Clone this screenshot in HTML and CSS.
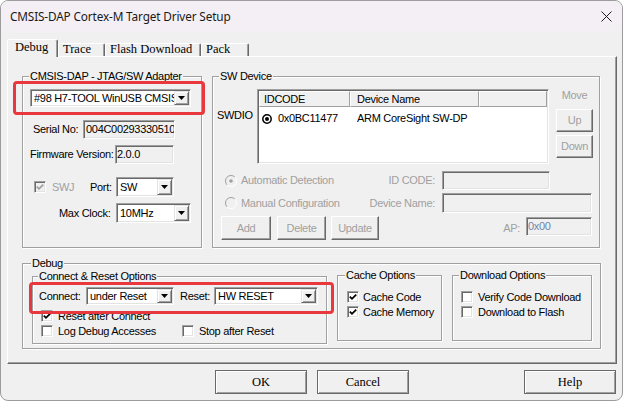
FILE: index.html
```html
<!DOCTYPE html>
<html>
<head>
<meta charset="utf-8">
<title>CMSIS-DAP Cortex-M Target Driver Setup</title>
<link rel="stylesheet" href="styles.css">
</head>
<body>
<div class="window">
  <div class="titlebar">
    <span class="title">CMSIS-DAP Cortex-M Target Driver Setup</span>
    <svg class="close" width="11" height="11" viewBox="0 0 11 11"><path d="M0.5 0.5L10.5 10.5M10.5 0.5L0.5 10.5" stroke="#1b1b1b" stroke-width="1" fill="none"/></svg>
  </div>
  <div class="client">
    <div class="tabs">
      <div class="tab active t-debug">Debug</div>
      <div class="tab t-trace">Trace</div>
      <div class="tab t-flash">Flash Download</div>
      <div class="tab t-pack">Pack</div>
    </div>
    <div class="panel">
      <div class="toprow">
        <div class="group g-adapter">
          <div class="legend lg-adapter">CMSIS-DAP - JTAG/SW Adapter</div>
          <div class="row ad1">
            <div class="combo c-adapter"><span class="cval">#98 H7-TOOL WinUSB CMSIS-DAP</span><span class="drop"><svg width="7" height="4" viewBox="0 0 7 4"><path d="M0 0H7L3.5 4Z" fill="#000"/></svg></span></div>
          </div>
          <div class="row ad2"><span class="lbl l-serial">Serial No:</span><div class="edit e-serial">004C0029333051000000</div></div>
          <div class="row ad3"><span class="lbl l-fw">Firmware Version:</span><div class="edit e-fw">2.0.0</div></div>
          <div class="row ad4">
            <div class="chkitem swj"><span class="chk dis"><svg width="8" height="8" viewBox="0 0 8 8"><polyline points="0.8,3.6 3,5.8 7.2,1.6" fill="none" stroke="#a0a0a0" stroke-width="1.8"/></svg></span><span class="dtext">SWJ</span></div>
            <span class="lbl l-port">Port:</span>
            <div class="combo c-port"><span class="cval">SW</span><span class="drop"><svg width="7" height="4" viewBox="0 0 7 4"><path d="M0 0H7L3.5 4Z" fill="#000"/></svg></span></div>
          </div>
          <div class="row ad5">
            <span class="lbl l-clock">Max Clock:</span>
            <div class="combo c-clock"><span class="cval">10MHz</span><span class="drop"><svg width="7" height="4" viewBox="0 0 7 4"><path d="M0 0H7L3.5 4Z" fill="#000"/></svg></span></div>
          </div>
        </div>
        <div class="group g-swdev">
          <div class="legend lg-sw">SW Device</div>
          <div class="sw-top">
            <span class="lbl l-swdio">SWDIO</span>
            <div class="listbox">
              <div class="lhead"><span class="hcell h1">IDCODE</span><span class="hcell h2">Device Name</span><span class="hcell h3"></span></div>
              <div class="lrow">
                <span class="lc1"><svg class="lradio" width="10" height="10" viewBox="0 0 10 10"><circle cx="5" cy="5" r="4.2" fill="#fff" stroke="#000" stroke-width="1.5"/><circle cx="5" cy="5" r="2" fill="#000"/></svg>0x0BC11477</span>
                <span class="lc2">ARM CoreSight SW-DP</span>
              </div>
            </div>
            <div class="movecol">
              <span class="dtext movelbl">Move</span>
              <div class="btn b-up">Up</div>
              <div class="btn b-down">Down</div>
            </div>
          </div>
          <div class="row sw-b">
            <div class="sw-left">
              <span class="radio"><svg width="12" height="12" viewBox="0 0 12 12"><circle cx="6" cy="6" r="5.5" fill="#f0f0f0"/><path d="M2.1 9.9A5.5 5.5 0 0 1 9.9 2.1" fill="none" stroke="#a0a0a0" stroke-width="1"/><path d="M9.9 2.1A5.5 5.5 0 0 1 2.1 9.9" fill="none" stroke="#fff" stroke-width="1"/><circle cx="6" cy="6" r="1.8" fill="#a0a0a0"/></svg></span>
              <span class="dtext rtext">Automatic Detection</span>
              <span class="dtext rlbl">ID CODE:</span>
            </div>
            <div class="edit e-idcode"></div>
          </div>
          <div class="row sw-c">
            <div class="sw-left">
              <span class="radio"><svg width="12" height="12" viewBox="0 0 12 12"><circle cx="6" cy="6" r="5.5" fill="#f0f0f0"/><path d="M2.1 9.9A5.5 5.5 0 0 1 9.9 2.1" fill="none" stroke="#a0a0a0" stroke-width="1"/><path d="M9.9 2.1A5.5 5.5 0 0 1 2.1 9.9" fill="none" stroke="#fff" stroke-width="1"/></svg></span>
              <span class="dtext rtext">Manual Configuration</span>
              <span class="dtext rlbl">Device Name:</span>
            </div>
            <div class="edit e-devname"></div>
          </div>
          <div class="row sw-d">
            <div class="btn b-add">Add</div>
            <div class="btn b-del">Delete</div>
            <div class="btn b-upd">Update</div>
            <span class="dtext ap">AP:</span>
            <div class="edit e-ap"><span class="aptext">0x00</span></div>
          </div>
        </div>
      </div>
      <div class="group g-debug">
        <div class="legend lg-debug">Debug</div>
        <div class="dbg-row">
          <div class="group g-conn">
            <div class="legend lg-conn">Connect &amp; Reset Options</div>
            <div class="row cn1">
              <span class="lbl l-connect">Connect:</span>
              <div class="combo c-connect"><span class="cval">under Reset</span><span class="drop"><svg width="7" height="4" viewBox="0 0 7 4"><path d="M0 0H7L3.5 4Z" fill="#000"/></svg></span></div>
              <span class="lbl l-reset">Reset:</span>
              <div class="combo c-reset"><span class="cval">HW RESET</span><span class="drop"><svg width="7" height="4" viewBox="0 0 7 4"><path d="M0 0H7L3.5 4Z" fill="#000"/></svg></span></div>
            </div>
            <div class="row cn2">
              <div class="chkitem ci-conn"><span class="chk"><svg width="8" height="8" viewBox="0 0 8 8"><polyline points="0.8,3.6 3,5.8 7.2,1.6" fill="none" stroke="#000" stroke-width="1.8"/></svg></span><span>Reset after Connect</span></div>
            </div>
            <div class="row cn3">
              <div class="chkitem ci-conn w-log"><span class="chk"></span><span>Log Debug Accesses</span></div>
              <div class="chkitem"><span class="chk"></span><span>Stop after Reset</span></div>
            </div>
          </div>
          <div class="group g-cache">
            <div class="legend lg-cache">Cache Options</div>
            <div class="row ck1"><div class="chkitem ci-cache"><span class="chk"><svg width="8" height="8" viewBox="0 0 8 8"><polyline points="0.8,3.6 3,5.8 7.2,1.6" fill="none" stroke="#000" stroke-width="1.8"/></svg></span><span>Cache Code</span></div></div>
            <div class="row ck2"><div class="chkitem ci-cache"><span class="chk"><svg width="8" height="8" viewBox="0 0 8 8"><polyline points="0.8,3.6 3,5.8 7.2,1.6" fill="none" stroke="#000" stroke-width="1.8"/></svg></span><span>Cache Memory</span></div></div>
          </div>
          <div class="group g-dl">
            <div class="legend lg-dl">Download Options</div>
            <div class="row ck1"><div class="chkitem ci-dl"><span class="chk"></span><span>Verify Code Download</span></div></div>
            <div class="row ck2"><div class="chkitem ci-dl"><span class="chk"></span><span>Download to Flash</span></div></div>
          </div>
        </div>
      </div>
      <div class="redbox rb1"></div>
      <div class="redbox rb2"></div>
    </div>
    <div class="btnrow">
      <div class="pbtn b-ok">OK</div>
      <div class="pbtn b-cancel">Cancel</div>
      <div class="pbtn b-help">Help</div>
    </div>
  </div>
</div>
</body>
</html>
```

FILE: styles.css
```css
* { box-sizing: border-box; }
html, body { margin: 0; padding: 0; background: #ffffff; }
body {
  font-family: "Liberation Sans", Arial, sans-serif;
  font-size: 11px;
  letter-spacing: -0.3px;
  line-height: 13px;
  color: #000;
}
.window {
  width: 623px;
  height: 401px;
  border: 1px solid #9c9c9c;
  border-radius: 8px;
  background: #f0f0f0;
  overflow: hidden;
  display: flex;
  flex-direction: column;
}
.titlebar {
  height: 30px;
  flex: none;
  display: flex;
  align-items: center;
  padding-left: 9px;
  background: #f4eff4;
  font-family: "Noto Sans", "Liberation Sans", sans-serif;
  font-size: 11.8px;
  letter-spacing: -0.15px;
  color: #1a1a1a;
}
.close { margin-left: auto; margin-right: 10px; }
.client { padding-top: 8px; }

/* tabs */
.tabs {
  display: flex;
  align-items: flex-end;
  height: 17px;
  margin-left: 6px;
  font-family: "Liberation Serif", "Times New Roman", serif;
  font-size: 12.5px;
  letter-spacing: 0;
}
.tab {
  height: 13px;
  line-height: 11px;
  padding-left: 4px;
  border: 1px solid;
  border-bottom: none;
  border-color: #ffffff #696969 #696969 #ffffff;
  box-shadow: inset -1px 0 0 #a0a0a0;
  border-radius: 2px 2px 0 0;
  background: #f0f0f0;
  white-space: nowrap;
}
.tab.active {
  height: 18px;
  margin-bottom: -1px;
  position: relative;
  z-index: 2;
  padding-left: 7px;
  padding-top: 1px;
  line-height: 13px;
}
.t-debug { width: 51px; }
.t-trace { width: 47px; }
.t-flash { width: 96px; }
.t-pack { width: 48px; }

/* panel */
.panel {
  position: relative;
  margin-left: 6px;
  width: 610px;
  height: 308px;
  border: 1px solid;
  border-color: #ffffff #696969 #696969 #ffffff;
  box-shadow: inset -1px -1px 0 #a0a0a0;
  padding: 19px 0 0 14px;
}
.toprow { display: flex; gap: 10px; }

.group {
  border: 1px solid #a0a0a0;
  box-shadow: inset 1px 1px 0 #ffffff, 1px 1px 0 #ffffff;
}
.legend {
  width: max-content;
  height: 13px;
  line-height: 13px;
  margin: -7px 0 -6px 6px;
  padding: 0 1px;
  background: #f0f0f0;
}
.lg-debug { margin-left: 8px; }
.lg-conn { margin-left: 5px; }
.lg-cache { margin-left: 7px; }

.row { display: flex; align-items: center; }
.lbl { flex: none; white-space: nowrap; }
.dtext { color: #a0a0a0; white-space: nowrap; }

/* sunken edit / combo */
.edit {
  flex: none;
  border: 1px solid;
  border-color: #a0a0a0 #ffffff #ffffff #a0a0a0;
  box-shadow: inset 1px 1px 0 #696969, inset -1px -1px 0 #e3e3e3;
  background: #f0f0f0;
  padding: 0 2px;
  line-height: 17px;
  overflow: hidden;
  white-space: nowrap;
}
.combo {
  flex: none;
  display: flex;
  border: 1px solid;
  border-color: #a0a0a0 #ffffff #ffffff #a0a0a0;
  box-shadow: inset 1px 1px 0 #696969, inset -1px -1px 0 #e3e3e3;
  background: #ffffff;
  padding: 1px;
}
.cval {
  flex: 1;
  min-width: 0;
  overflow: hidden;
  white-space: nowrap;
  padding-left: 2px;
  display: flex;
  align-items: center;
}
.drop {
  width: 15px;
  flex: none;
  display: flex;
  align-items: center;
  justify-content: center;
  background: #f0f0f0;
  border: 1px solid;
  border-color: #e3e3e3 #696969 #696969 #e3e3e3;
  box-shadow: inset 1px 1px 0 #ffffff, inset -1px -1px 0 #a0a0a0;
}
.drop svg { display: block; }

/* checkbox */
.chkitem { display: flex; align-items: center; white-space: nowrap; }
.chk {
  width: 12px;
  height: 12px;
  flex: none;
  margin-right: 5px;
  border: 1px solid;
  border-color: #a0a0a0 #ffffff #ffffff #a0a0a0;
  box-shadow: inset 1px 1px 0 #696969, inset -1px -1px 0 #e3e3e3;
  background: #ffffff;
  display: flex;
  align-items: center;
  justify-content: center;
}
.chk svg { display: block; }
.chk.dis { background: #f0f0f0; }

/* raised button */
.btn {
  flex: none;
  display: flex;
  align-items: center;
  justify-content: center;
  border: 1px solid;
  border-color: #ffffff #696969 #696969 #ffffff;
  box-shadow: inset -1px -1px 0 #a0a0a0;
  background: #f0f0f0;
  color: #a0a0a0;
}

/* adapter group */
.g-adapter { width: 180px; height: 172px; }
.ad1 { margin: 12px 0 0 7px; }
.c-adapter { width: 161px; height: 18px; }
.ad2 { margin: 13px 0 0 10px; height: 19px; }
.l-serial { width: 50px; }
.e-serial { width: 92px; height: 19px; padding-left: 2px; }
.ad3 { margin: 6px 0 0 7px; height: 19px; }
.l-fw { width: 85px; }
.e-fw { width: 59px; height: 19px; padding-left: 1px; }
.ad4 { margin: 13px 0 0 11px; height: 20px; }
.swj { width: 56px; }
.swj .chk { margin-right: 6px; }
.l-port { width: 26px; }
.c-port { width: 58px; height: 20px; }
.ad5 { margin: 6px 0 0 36px; height: 20px; }
.l-clock { width: 57px; }
.c-clock { width: 75px; height: 20px; }

/* sw device group */
.g-swdev { width: 388px; height: 172px; }
.sw-top { display: flex; margin-top: 12px; height: 75px; }
.l-swdio { width: 40px; margin: 20px 0 0 4px; }
.listbox {
  width: 292px;
  height: 75px;
  flex: none;
  border: 1px solid;
  border-color: #a0a0a0 #ffffff #ffffff #a0a0a0;
  box-shadow: inset 1px 1px 0 #696969, inset -1px -1px 0 #e3e3e3;
  background: #ffffff;
  padding: 1px;
}
.lhead { display: flex; height: 16px; }
.hcell {
  height: 16px;
  line-height: 14px;
  background: #f0f0f0;
  border: 1px solid;
  border-color: #ffffff #a0a0a0 #a0a0a0 #ffffff;
  white-space: nowrap;
}
.h1 { width: 91px; padding-left: 4px; }
.h2 { width: 129px; padding-left: 6px; }
.h3 { flex: 1; }
.lrow { display: flex; align-items: center; height: 17px; margin-top: 3px; }
.lc1 { width: 91px; padding-left: 3px; display: flex; align-items: center; }
.lradio { display: block; margin-right: 6px; }
.lc2 { padding-left: 7px; }
.movecol { width: 37px; margin-left: 7px; display: flex; flex-direction: column; }
.movelbl { text-align: center; height: 13px; }
.b-up { height: 23px; margin-top: 7px; }
.b-down { height: 23px; margin-top: 3px; }

.sw-b { margin-top: 7px; height: 19px; }
.sw-c { margin-top: 3px; height: 20px; }
.sw-left { width: 222px; display: flex; align-items: center; }
.radio { margin-left: 12px; width: 12px; height: 12px; flex: none; }
.radio svg { display: block; }
.rtext { margin-left: 4px; }
.rlbl { margin-left: auto; }
.e-idcode { width: 108px; height: 19px; margin-left: 7px; }
.e-devname { width: 150px; height: 20px; margin-left: 7px; }
.sw-d { margin-top: 3px; height: 24px; align-items: flex-start; }
.b-add { width: 50px; height: 24px; margin-left: 8px; }
.b-del { width: 49px; height: 24px; margin-left: 6px; }
.b-upd { width: 48px; height: 24px; margin-left: 5px; }
.ap { margin-left: auto; margin-right: 6px; align-self: center; }
.e-ap { width: 66px; height: 19px; margin: 1px 7px 0 0; padding-left: 1px; }
.aptext { color: #6f86ad; }

/* debug group */
.g-debug { width: 579px; height: 86px; margin-top: 15px; }
.dbg-row { display: flex; align-items: flex-start; margin-top: 11px; }
.g-conn { width: 295px; height: 68px; margin: 1px 0 0 9px; }
.cn1 { margin: 10px 0 0 6px; height: 18px; }
.l-connect { width: 47px; }
.c-connect { width: 88px; height: 18px; }
.l-reset { width: 34px; margin-left: 6px; }
.c-reset { width: 104px; height: 18px; }
.cn2 { margin: 5px 0 0 8px; height: 12px; }
.cn3 { margin: 3px 0 0 8px; height: 12px; }
.w-log { width: 141px; }
.g-cache { width: 105px; height: 66px; margin-left: 10px; }
.g-dl { width: 140px; height: 66px; margin-left: 10px; }
.ck1 { margin-top: 15px; height: 12px; }
.ck2 { margin-top: 3px; height: 12px; }
.ci-cache { margin-left: 9px; }
.ci-cache .chk { margin-right: 4px; }
.ci-dl { margin-left: 8px; }

/* red highlight boxes */
.redbox {
  position: absolute;
  border: 3px solid #e8383d;
  border-radius: 4px;
  z-index: 5;
}
.rb1 { left: 5px; top: 24px; width: 192px; height: 34px; }
.rb2 { left: 21px; top: 225px; width: 305px; height: 32px; }

/* dialog buttons */
.btnrow { display: flex; margin-top: 6px; }
.pbtn {
  width: 92px;
  height: 24px;
  display: flex;
  align-items: center;
  justify-content: center;
  border: 1px solid #696969;
  box-shadow: inset 1px 1px 0 #ffffff, inset -1px -1px 0 #a0a0a0;
  background: #f0f0f0;
  font-family: "Liberation Serif", "Times New Roman", serif;
  font-size: 12.5px;
  letter-spacing: 0;
}
.b-ok { margin-left: 214px; }
.b-cancel { margin-left: 10px; }
.b-help { margin-left: auto; margin-right: 6px; }
```
